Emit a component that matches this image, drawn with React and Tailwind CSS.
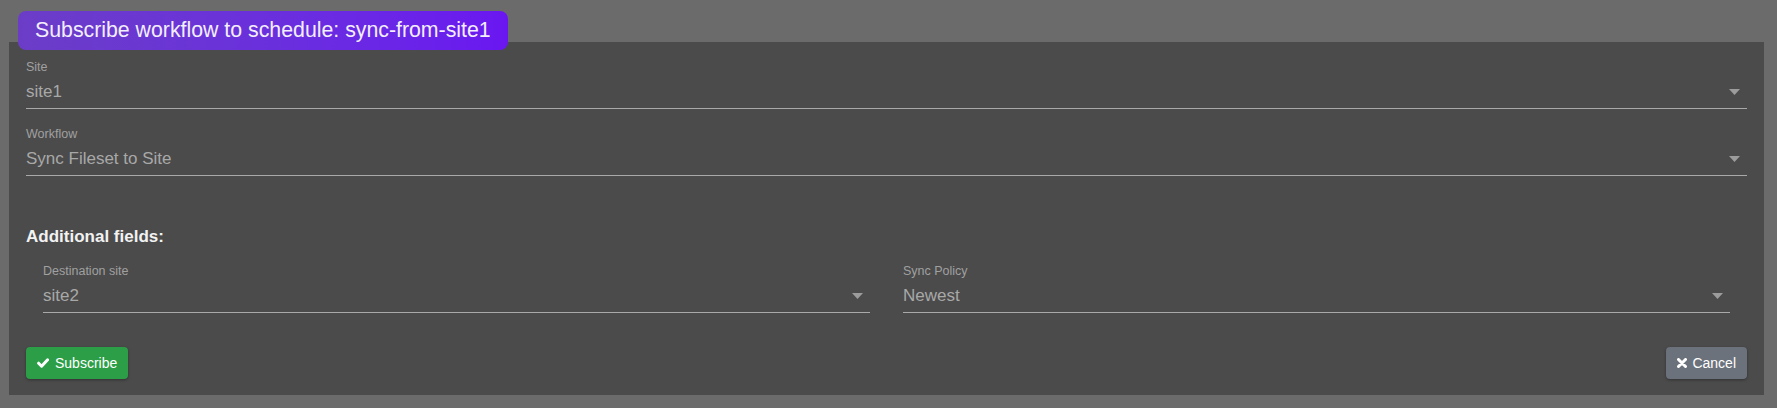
// Underlined select-like field with a small caret on the right
function SelectField({ label, value }) {
  return (
    <div className="flex flex-col">
      <label className="text-[12.5px] leading-[14px] text-[#a0a0a0]">{label}</label>
      <div className="mt-[6px] flex items-center justify-between border-b border-[#a9a9a9] pb-[4px]">
        <span className="text-[17px] leading-[24px] text-[#a8a8a8]">{value}</span>
        <svg width="11" height="6" viewBox="0 0 11 6" className="mr-[7px]">
          <path d="M0 0 L11 0 L5.5 6 Z" fill="#9c9c9c" />
        </svg>
      </div>
    </div>
  );
}

// chunky check, like the old font icon
function CheckIcon() {
  return (
    <svg width="12" height="10" viewBox="0 0 12 10">
      <path d="M1.6 5.2 L4.6 8.2 L10.6 1.8" fill="none" stroke="white" strokeWidth="3" strokeLinecap="round" strokeLinejoin="round" />
    </svg>
  );
}

// chunky "times" glyph
function TimesIcon() {
  return (
    <svg width="10" height="10" viewBox="0 0 10 10">
      <path d="M1.5 1.5 L8.5 8.5 M8.5 1.5 L1.5 8.5" stroke="white" strokeWidth="3" strokeLinecap="round" />
    </svg>
  );
}

export default function App() {
  return (
    <div
      className="min-h-screen bg-[#6b6b6b] pl-[9px] pr-[13px] pt-[11px] pb-[13px]"
      style={{ fontFamily: '"Liberation Sans", Arial, sans-serif' }}
    >
      {/* Title badge sits on top of the panel */}
      <div className="relative z-10 mb-[-8px] ml-[9px] flex h-[39px] w-fit items-center rounded-[8px] bg-gradient-to-r from-[#6b3dc7] to-[#6a16f1] px-[17px]">
        <h1 className="text-[21.3px] leading-none text-[#f3eefe]">
          Subscribe workflow to schedule: sync-from-site1
        </h1>
      </div>

      <div className="bg-[#4b4b4b] px-[17px] pt-[18px] pb-[16px]">
        <SelectField label="Site" value="site1" />
        <div className="mt-[18px]">
          <SelectField label="Workflow" value="Sync Fileset to Site" />
        </div>

        <h2 className="mt-[51px] text-[17px] font-bold leading-[20px] text-[#f2f2f2]">
          Additional fields:
        </h2>

        <div className="mt-[17px] grid grid-cols-2 gap-[33px] px-[17px]">
          <SelectField label="Destination site" value="site2" />
          <SelectField label="Sync Policy" value="Newest" />
        </div>

        <div className="mt-[34px] flex items-center justify-between">
          <button className="flex h-[32px] items-center gap-[6px] rounded-[4px] bg-[#2c9e47] px-[11px] text-[14px] text-white shadow-[0_1px_3px_rgba(0,0,0,0.35)]">
            <CheckIcon />
            Subscribe
          </button>
          <button className="flex h-[32px] items-center gap-[5px] rounded-[4px] bg-[#6b727b] px-[11px] text-[14px] text-white shadow-[0_1px_3px_rgba(0,0,0,0.35)]">
            <TimesIcon />
            Cancel
          </button>
        </div>
      </div>
    </div>
  );
}
